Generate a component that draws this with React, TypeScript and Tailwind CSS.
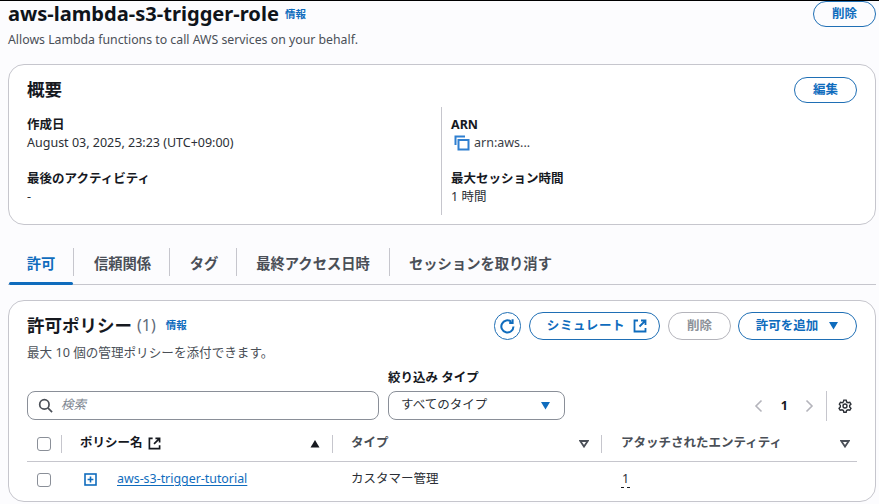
import React from "react";

const font = { fontFamily: '"Noto Sans", "Noto Sans CJK JP", sans-serif' };

function Pill({ children, className = "" }: { children: React.ReactNode; className?: string }) {
  return (
    <div className={"flex items-center justify-center rounded-full border border-[#1f6fb5] text-[#0f6cbd] text-[12.5px] font-bold " + className}>
      {children}
    </div>
  );
}

function Ext({ color, size = 14 }: { color: string; size?: number }) {
  return (
    <svg width={size} height={size} viewBox="0 0 14 14" fill="none" stroke={color} strokeWidth="1.8">
      <path d="M5 1.5H1.5v11h11V9" />
      <path d="M8 1.5h4.5V6M12.5 1.5 6.5 7.5" />
    </svg>
  );
}

function Caret({ color = "#4a4f57" }: { color?: string }) {
  return (
    <svg width="10" height="8" viewBox="0 0 10 8" fill="none" stroke={color} strokeWidth="1.8">
      <path d="M1.2 1h7.6L5 6.6Z" />
    </svg>
  );
}

function Check() {
  return <div className="w-[14px] h-[14px] rounded-[3px] border border-[#8a8f98] bg-white" />;
}

function Field({ label, children }: { label: string; children: React.ReactNode }) {
  return (
    <div className="h-[54px]">
      <div className="h-[18px] leading-[18px] text-[12.5px] font-bold text-[#16191f]">{label}</div>
      <div className="h-[18px] leading-[18px] text-[12.5px] text-[#2b2f36]">{children}</div>
    </div>
  );
}

export default function App() {
  const tabs: [string, string][] = [
    ["信頼関係", "w-[96px] justify-center pl-[2px]"],
    ["タグ", "w-[67px] justify-center pl-[2px]"],
    ["最終アクセス日時", "w-[153px] justify-center"],
    ["セッションを取り消す", "w-[183px] pl-[19px]"],
  ];
  return (
    <div style={font} className="w-[879px] h-[504px] overflow-hidden bg-[#fcfcfe] border-t border-black text-[#16191f]">
      <div className="flex justify-between pl-2 pr-[3px] h-[63px]">
        <div>
          <div className="flex items-center h-[26px] gap-[6px]">
            <span className="text-[20.1px] leading-[26px] font-bold text-[#0f141a]">aws-lambda-s3-trigger-role</span>
            <span className="text-[10.5px] font-bold text-[#0f6cbd] mt-[2px]">情報</span>
          </div>
          <div className="text-[12.3px] leading-[18px] mt-[4px] text-[#4a4f57]">Allows Lambda functions to call AWS services on your behalf.</div>
        </div>
        <Pill className="w-[63px] h-[26px]">削除</Pill>
      </div>

      <div className="mx-2 mr-[3px] h-[161px] rounded-[16px] border border-[#c6c6cd] bg-white pt-3 pb-2 pl-[18px] pr-[18px]">
        <div className="flex justify-between items-center h-[26px]">
          <div className="text-[17.5px] font-bold leading-[24px] mb-[2px]">概要</div>
          <Pill className="w-[63px] h-[26px]">編集</Pill>
        </div>
        <div className="flex mt-[4px] h-[108px]">
          <div className="w-[414px] pt-[9px]">
            <Field label="作成日">August 03, 2025, 23:23 (UTC+09:00)</Field>
            <Field label="最後のアクティビティ">-</Field>
          </div>
          <div className="flex-1 border-l border-[#c6c6cd] pl-[9px] pt-[9px]">
            <Field label="ARN">
              <span className="flex items-center gap-[4px] pl-[3px]">
                <svg width="16" height="16" viewBox="0 0 16 16" fill="none" stroke="#2f7fd0" strokeWidth="2">
                  <path d="M1.5 10V1.5H11" />
                  <rect x="4.5" y="5" width="10" height="9.5" />
                </svg>
                <span className="text-[#3b4047]">arn:aws...</span>
              </span>
            </Field>
            <Field label="最大セッション時間">1 時間</Field>
          </div>
        </div>
      </div>

      <div className="ml-2 mr-[3px] mt-[23px] h-[37px] border-b border-[#c6c6cd] relative flex pl-px">
        <div className="w-[65px] h-[28px] flex items-center justify-center pt-[4px] text-[14.3px] font-bold text-[#0f6cbd] border-r border-[#c6c6cd]">許可</div>
        <div className="absolute left-px bottom-[-1px] w-[64px] h-[3px] bg-[#0f6cbd] rounded-sm" />
        {tabs.map(([t, w], i) => (
          <div
            key={t}
            className={"h-[28px] flex items-center pt-[4px] text-[14.3px] font-bold text-[#4a4f57] " + w + (i < 3 ? " border-r border-[#c6c6cd]" : "")}
          >
            {t}
          </div>
        ))}
      </div>

      <div className="ml-2 mr-[3px] mt-[15px] h-[202px] rounded-[16px] border border-[#c6c6cd] bg-white pt-[11px] pl-[18px] pr-[18px]">
        <div className="flex justify-between h-[28px]">
          <div className="flex items-center mb-[2px]">
            <span className="text-[17.5px] font-bold">許可ポリシー</span>
            <span className="text-[16px] text-[#5f6b7a] ml-[5px]">(1)</span>
            <span className="text-[10.5px] font-bold text-[#0f6cbd] ml-[10px] mt-[2px]">情報</span>
          </div>
          <div className="flex">
            <Pill className="w-[27px] h-[28px] mr-2">
              <svg width="17" height="17" viewBox="0 0 16 16" fill="none" stroke="#0f6cbd" strokeWidth="1.9">
                <path d="M13.6 8A5.7 5.7 0 1 1 11.6 3.6" />
                <path d="M9.6 4.6h3.2V1.2" />
              </svg>
            </Pill>
            <Pill className="w-[131px] h-[28px] gap-2 tracking-[0.6px] mr-2 pl-[5px]">
              シミュレート <Ext color="#0f6cbd" />
            </Pill>
            <div className="w-[63px] h-[28px] mr-[7px] rounded-full border border-[#b4b4bb] flex items-center justify-center text-[12.5px] font-bold text-[#8d9299]">削除</div>
            <Pill className="w-[119px] h-[28px] gap-[10px]">
              許可を追加
              <svg width="11" height="8" viewBox="0 0 10 8"><path d="M.5 0h9L5 7.5Z" fill="#0f6cbd" /></svg>
            </Pill>
          </div>
        </div>
        <div className="text-[12.6px] leading-[18px] text-[#4a4f57] mt-[4px]">最大 10 個の管理ポリシーを添付できます。</div>

        <div className="flex items-end mt-[7px] h-[51px]">
          <div className="w-[352px] h-[29px] rounded-[8px] border border-[#8a8f98] bg-white flex items-center pl-[10px] gap-2">
            <svg width="15" height="15" viewBox="0 0 16 16" fill="none" stroke="#4a4f57" strokeWidth="1.8">
              <circle cx="6.8" cy="6.8" r="5" />
              <path d="M10.5 10.5 15 15" />
            </svg>
            <span className="text-[12.5px] italic text-[#7d8590]">検索</span>
          </div>
          <div className="ml-[9px] w-[177px]">
            <div className="text-[12.5px] font-bold leading-[18px] mb-[4px]">絞り込み タイプ</div>
            <div className="h-[29px] rounded-[8px] border border-[#8a8f98] bg-white flex items-center justify-between pl-[12px] pr-[13px] text-[12.5px] text-[#2b2f36]">
              <span>すべてのタイプ</span>
              <svg width="11" height="8" viewBox="0 0 10 8"><path d="M.5 0h9L5 7.5Z" fill="#0f6cbd" /></svg>
            </div>
          </div>
          <div className="flex-1 flex items-center justify-end h-[30px] mb-[-1px]">
            <svg width="9" height="14" viewBox="0 0 9 14" fill="none" stroke="#b4b4bb" strokeWidth="1.6" className="mr-[18px]"><path d="M7.5 1.5 2 7l5.5 5.5" /></svg>
            <span className="text-[12.5px] font-bold mr-[17px]">1</span>
            <svg width="9" height="14" viewBox="0 0 9 14" fill="none" stroke="#b4b4bb" strokeWidth="1.6" className="mr-[12px]"><path d="M1.5 1.5 7 7l-5.5 5.5" /></svg>
            <div className="w-px h-[30px] bg-[#c6c6cd] mr-[11px]" />
            <svg width="14" height="14" viewBox="0 0 24 24" fill="none" stroke="#2b2f36" strokeWidth="2.4" className="mr-[5px]">
              <circle cx="12" cy="12" r="3.4" />
              <path d="M10 2h4l.7 3 2.5 1.4 3-.9 2 3.4-2.2 2.1v2.8l2.2 2.1-2 3.4-3-.9-2.5 1.4-.7 3h-4l-.7-3-2.5-1.4-3 .9-2-3.4 2.2-2.1v-2.8L2.3 8.9l2-3.4 3 .9L9.3 5Z" />
            </svg>
          </div>
        </div>

        <div className="grid grid-cols-[35px_271px_269px_255px] h-[42px] pt-[6px] items-center border-b border-[#c6c6cd]">
          <div className="h-[18px] flex items-center pl-[10px] border-r border-[#c6c6cd]"><Check /></div>
          <div className="h-[18px] flex items-center pl-[18px] pr-[12px] border-r border-[#c6c6cd] text-[12.5px] font-bold">
            <span>ポリシー名</span>
            <span className="ml-[5px]"><Ext color="#16191f" size={13} /></span>
            <svg width="10" height="8" viewBox="0 0 10 8" className="ml-auto"><path d="M.5 7.5h9L5 0Z" fill="#16191f" /></svg>
          </div>
          <div className="h-[18px] flex items-center justify-between pl-[18px] pr-[12px] border-r border-[#c6c6cd] text-[12.5px] font-bold text-[#4a4f57]">
            <span>タイプ</span>
            <Caret />
          </div>
          <div className="h-[18px] flex items-center justify-between pl-[19px] pr-[7px] text-[12.5px] font-bold text-[#4a4f57]">
            <span>アタッチされたエンティティ</span>
            <Caret />
          </div>
        </div>

        <div className="grid grid-cols-[35px_271px_269px_255px] h-[35px] items-center text-[12.5px]">
          <div className="pl-[10px]"><Check /></div>
          <div className="flex items-center pl-[22px]">
            <svg width="13" height="13" viewBox="0 0 13 13" fill="none" stroke="#0f6cbd" strokeWidth="1.6">
              <rect x="1" y="1" width="11" height="11" />
              <path d="M6.5 3.6v5.8M3.6 6.5h5.8" />
            </svg>
            <span className="ml-[20px] text-[12.4px] text-[#0f6cbd] underline underline-offset-2">aws-s3-trigger-tutorial</span>
          </div>
          <div className="pl-[18px] text-[#2b2f36]">カスタマー管理</div>
          <div className="pl-[19px]">
            <span className="inline-block px-px leading-[16px] border-b border-dashed border-[#16191f] text-[#2b2f36]">1</span>
          </div>
        </div>
      </div>
    </div>
  );
}
